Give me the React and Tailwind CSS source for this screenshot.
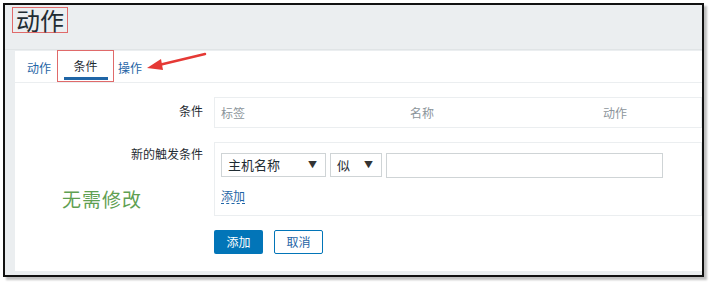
import React from 'react';

function Select({ label, width }) {
  return (
    <div
      className="flex h-[24px] items-center justify-between border border-[#cfd4d6] bg-white pl-[6px] pr-[8px] text-[13px] text-[#1f2c33]"
      style={{ width }}
    >
      <span>{label}</span>
      <span className="text-[9px] text-[#333]">▼</span>
    </div>
  );
}

export default function App() {
  return (
    <div className="relative h-[285px] w-[712px] bg-white font-['Noto_Sans_CJK_SC','Noto_Sans',sans-serif]">
      <div className="ml-[3px] mt-[3px] h-[274px] w-[701px] border-2 border-[#111] bg-[#ebeef0] shadow-[3px_3px_2px_rgba(0,0,0,0.25)]">
        {/* header */}
        <div className="flex h-[45px] items-start border-b border-[#e0e4e6] pl-[7px] pt-[2px]">
          <div className="border border-[#e06a6a] px-[3px] text-[24px] leading-[24px] text-[#1f2c33]">动作</div>
        </div>

        {/* white panel */}
        <div className="relative ml-[10px] mt-[1px] h-[220px] bg-white">
          {/* tabs */}
          <div className="flex h-[32px] items-end border-b border-[#ebeef0] text-[12px]">
            <div className="ml-[12px] pb-[5px] text-[#1f65a6]">动作</div>
            <div className="ml-[6px] flex h-[32px] w-[57px] flex-col items-center justify-end border border-[#e06a6a]">
              <span className="pb-[2px] text-[#1f2c33]">条件</span>
              <div className="mb-[1px] h-[3px] w-[44px] bg-[#1f65a6]" />
            </div>
            <div className="ml-[4px] pb-[5px] text-[#1f65a6]">操作</div>
          </div>

          {/* arrow */}
          <svg className="absolute left-[128px] top-[1px]" width="64" height="20" viewBox="0 0 64 20">
            <path d="M62 2 L16 13" stroke="#e53935" strokeWidth="2.5" fill="none" strokeLinecap="round" />
            <path d="M4 16 L18 7 L20 18 Z" fill="#e53935" />
          </svg>

          {/* rows */}
          <div className="mt-[14px] flex">
            <div className="w-[188px] pt-[5px] text-right text-[12px] text-[#1f2c33]">条件</div>
            <div className="ml-[11px] flex h-[31px] flex-1 items-center border border-[#ebeef0] pl-[6px] text-[12px] text-[#8c959b]">
              <span className="w-[189px]">标签</span>
              <span className="w-[193px]">名称</span>
              <span>动作</span>
            </div>
          </div>

          <div className="mt-[14px] flex">
            <div className="w-[188px] pt-[3px] text-right text-[12px] text-[#1f2c33]">新的触发条件</div>
            <div className="ml-[11px] h-[74px] flex-1 border border-[#ebeef0] pl-[6px] pt-[10px]">
              <div className="flex gap-[4px]">
                <Select label="主机名称" width={105} />
                <Select label="似" width={52} />
                <div className="h-[25px] w-[277px] border border-[#cfd4d6] bg-white" />
              </div>
              <div className="mt-[10px] inline-block border-b border-dashed border-[#1f65a6] text-[12px] leading-[15px] text-[#1f65a6]">添加</div>
            </div>
          </div>

          <div className="ml-[199px] mt-[14px] flex gap-[11px] text-[12px]">
            <div className="flex h-[24px] w-[49px] items-center justify-center rounded-[2px] bg-[#0275b8] text-white">添加</div>
            <div className="flex h-[24px] w-[49px] items-center justify-center rounded-[2px] border border-[#0275b8] bg-white text-[#1f65a6]">取消</div>
          </div>

          {/* annotation */}
          <div className="absolute left-[47px] top-[134px] text-[19px] tracking-[1px] text-[#5fa052]">无需修改</div>
        </div>
      </div>
    </div>
  );
}
